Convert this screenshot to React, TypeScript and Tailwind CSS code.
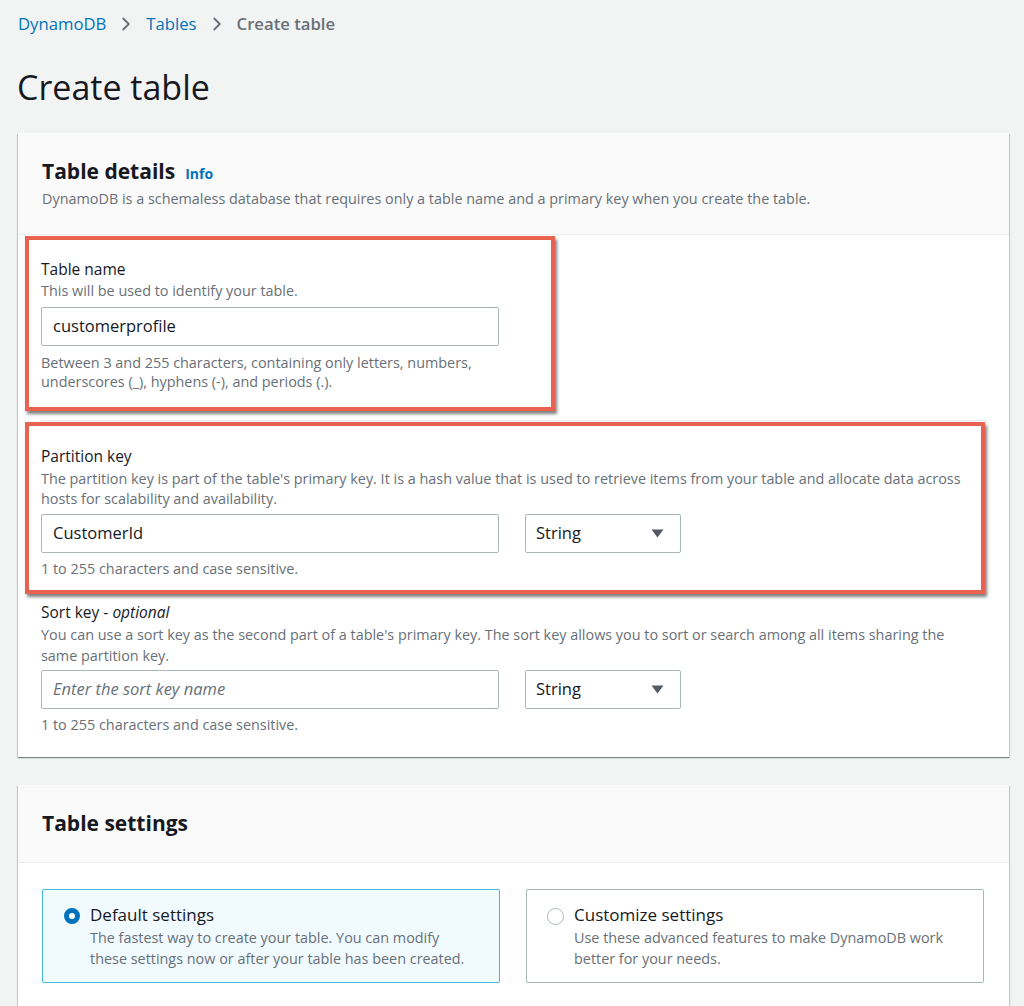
import { ChevronRight } from "lucide-react";

const font = { fontFamily: '"Open Sans", "Noto Sans", Arial, sans-serif' };

function Caret() {
  return (
    <svg width="13" height="9" viewBox="0 0 13 9" className="text-[#545b64]">
      <path d="M0.5 0.5 H12.5 L6.5 8.5 Z" fill="currentColor" />
    </svg>
  );
}

function TypeSelect() {
  return (
    <div className="flex h-[39px] w-[156px] items-center justify-between rounded-[2px] border border-[#aab7b8] bg-white pl-[10px] pr-[16px] text-[16.5px] text-[#16191f]">
      <span>String</span>
      <Caret />
    </div>
  );
}

function TextInput({ value, placeholder }: { value?: string; placeholder?: string }) {
  return (
    <div className="flex h-[39px] w-[458px] items-center rounded-[2px] border border-[#aab7b8] bg-white px-[11px] text-[16.5px]">
      {value ? (
        <span className="text-[#16191f]">{value}</span>
      ) : (
        <span className="italic text-[#687078]">{placeholder}</span>
      )}
    </div>
  );
}

function Annotated({ children, className }: { children: React.ReactNode; className: string }) {
  return (
    <div
      className={
        "border-4 border-[#e8624f] bg-white px-3 shadow-[2px_3px_3px_rgba(0,0,0,0.5)] " + className
      }
    >
      {children}
    </div>
  );
}

const cardShadow =
  "shadow-[0_1px_1px_0_rgba(0,28,36,0.3),1px_1px_1px_0_rgba(0,28,36,0.15),-1px_1px_1px_0_rgba(0,28,36,0.15)]";

export default function App() {
  return (
    <div className="min-h-[1006px] bg-[#f2f3f3] pt-[12px] text-[#16191f]" style={font}>
      {/* Breadcrumbs */}
      <nav className="flex h-[24px] items-center pl-[18px] text-[16.7px]">
        <span className="text-[#0073bb]">DynamoDB</span>
        <ChevronRight size={22} strokeWidth={2} className="mx-[9px] text-[#687078]" />
        <span className="text-[#0073bb]">Tables</span>
        <ChevronRight size={22} strokeWidth={2} className="mx-[9px] text-[#687078]" />
        <span className="font-semibold text-[#687078]">Create table</span>
      </nav>

      <h1 className="mt-[28px] pl-[17px] text-[34px] leading-[46px] font-normal">Create table</h1>

      {/* Table details */}
      <section className={"mt-[23px] ml-[18px] w-[991px] bg-white " + cardShadow}>
        <header className="border-b border-[#eaeded] bg-[#fafafa] px-[24px] pt-[26px] pb-[26px]">
          <div className="flex items-baseline gap-[10px]">
            <h2 className="text-[21px] leading-[25px] font-bold">Table details</h2>
            <span className="text-[14px] font-bold text-[#0073bb]">Info</span>
          </div>
          <p className="mt-[6px] text-[14.4px] leading-[18px] text-[#687078]">
            DynamoDB is a schemaless database that requires only a table name and a primary key when
            you create the table.
          </p>
        </header>

        <div className="pt-[1px] pb-[23px] pl-[7px] pr-[22px]">
          <Annotated className="w-[530px] pt-[19px] pb-[16px]">
            <div className="text-[15.5px] leading-[20px]">Table name</div>
            <p className="mt-[3px] text-[14.4px] leading-[18px] text-[#687078]">
              This will be used to identify your table.
            </p>
            <div className="mt-[7px]">
              <TextInput value="customerprofile" />
            </div>
            <p className="mt-[7px] w-[470px] text-[14.4px] leading-[19px] text-[#687078]">
              Between 3 and 255 characters, containing only letters, numbers, underscores (_),
              hyphens (-), and periods (.).
            </p>
          </Annotated>

          <div className="mt-[9px] mb-[1px] ml-[16px] h-px bg-[#eaeded]" />

          <Annotated className="w-[960px] pt-[20px] pb-[12px]">
            <div className="text-[15.5px] leading-[20px]">Partition key</div>
            <p className="mt-[3px] text-[14.4px] leading-[20px] text-[#687078]">
              The partition key is part of the table's primary key. It is a hash value that is used
              to retrieve items from your table and allocate data across hosts for scalability and
              availability.
            </p>
            <div className="mt-[5px] flex gap-[26px]">
              <TextInput value="CustomerId" />
              <TypeSelect />
            </div>
            <p className="mt-[6px] text-[14.4px] leading-[19px] text-[#687078]">
              1 to 255 characters and case sensitive.
            </p>
          </Annotated>

          <div className="mt-[8px] pl-[16px]">
            <div className="text-[15.5px] leading-[20px]">
              Sort key - <span className="italic">optional</span>
            </div>
            <p className="mt-[3px] w-[925px] text-[14.4px] leading-[20.5px] text-[#687078]">
              You can use a sort key as the second part of a table's primary key. The sort key allows
              you to sort or search among all items sharing the same partition key.
            </p>
            <div className="mt-[4px] flex gap-[26px]">
              <TextInput placeholder="Enter the sort key name" />
              <TypeSelect />
            </div>
            <p className="mt-[6px] text-[14.4px] leading-[19px] text-[#687078]">
              1 to 255 characters and case sensitive.
            </p>
          </div>
        </div>
      </section>

      {/* Table settings */}
      <section className={"mt-[28px] ml-[18px] w-[991px] bg-white " + cardShadow}>
        <header className="flex h-[78px] items-center border-b border-[#eaeded] bg-[#fafafa] px-[24px]">
          <h2 className="text-[21px] leading-[25px] font-bold">Table settings</h2>
        </header>
        <div className="flex gap-[26px] px-[24px] pt-[26px] pb-[24px]">
          <div className="flex h-[94px] w-[458px] gap-[10px] rounded-[2px] border border-[#44b9d6] bg-[#f1faff] pt-[14px] pl-[21px] pr-[12px]">
            <div className="mt-[4px] h-[16px] w-[16px] shrink-0 rounded-full border-[5px] border-[#0073bb] bg-white" />
            <div>
              <div className="text-[17px] leading-[22px]">Default settings</div>
              <p className="mt-[1px] whitespace-nowrap text-[14.4px] leading-[21px] text-[#687078]">
                The fastest way to create your table. You can modify
                <br />
                these settings now or after your table has been created.
              </p>
            </div>
          </div>
          <div className="flex h-[94px] w-[458px] gap-[10px] rounded-[2px] border border-[#aab7b8] bg-white pt-[14px] pl-[20px] pr-[16px]">
            <div className="mt-[4px] h-[17px] w-[17px] shrink-0 rounded-full border-[1.5px] border-[#aab7b8] bg-white" />
            <div>
              <div className="text-[17px] leading-[22px]">Customize settings</div>
              <p className="mt-[1px] w-[390px] text-[14.4px] leading-[21px] text-[#687078]">
                Use these advanced features to make DynamoDB work better for your needs.
              </p>
            </div>
          </div>
        </div>
      </section>
    </div>
  );
}
